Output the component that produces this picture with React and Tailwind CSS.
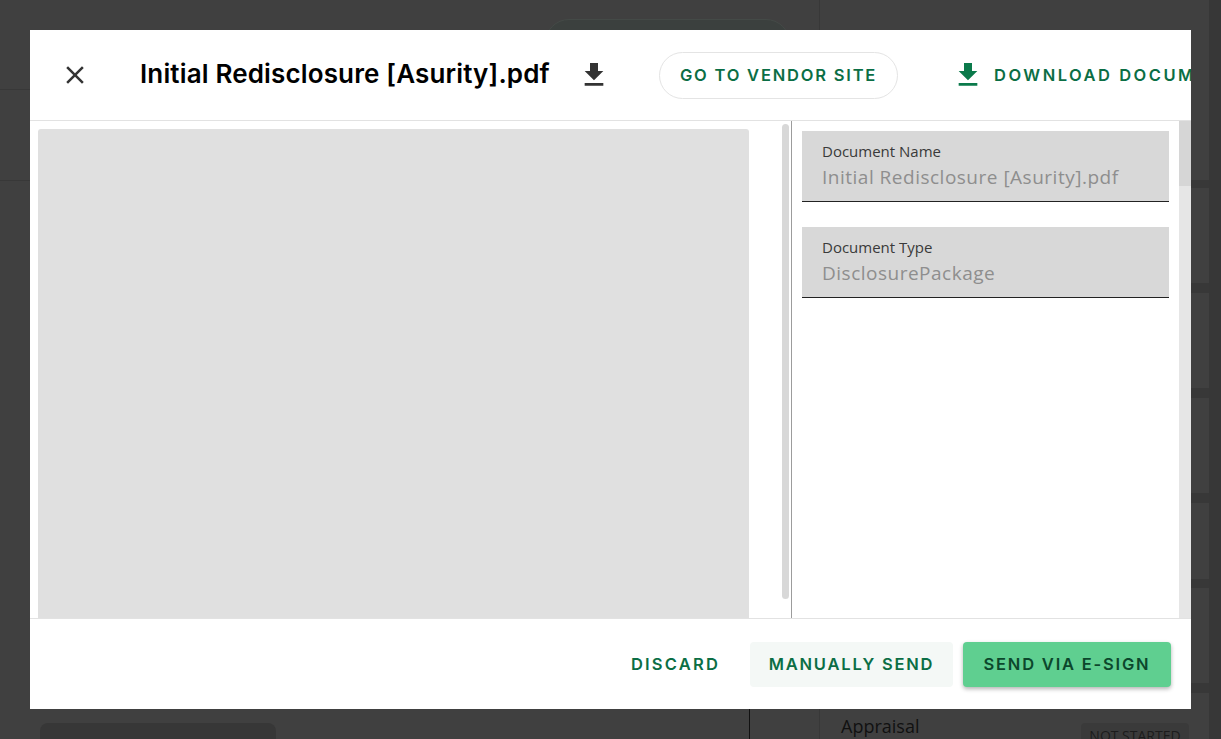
import React from "react";

const poppins = "font-['Inter','Liberation_Sans',sans-serif]";
const open = "font-['Open_Sans','Noto_Sans',sans-serif]";

function GetApp({ className }) {
  return (
    <svg viewBox="0 0 24 24" className={className} fill="currentColor">
      <path d="M19 9h-4V3H9v6H5l7 7 7-7zM5 18v2h14v-2H5z" />
    </svg>
  );
}

function Close({ className }) {
  return (
    <svg viewBox="0 0 24 24" className={className} fill="currentColor">
      <path d="M19 6.41 17.59 5 12 10.59 6.41 5 5 6.41 10.59 12 5 17.59 6.41 19 12 13.41 17.59 19 19 17.59 13.41 12z" />
    </svg>
  );
}

function Field({ label, value }) {
  return (
    <div className={`h-[71px] bg-[#d8d8d8] border-b border-[#222222] pl-5 pt-[11px] ${open}`}>
      <div className="text-[15px] leading-[19px] text-[#3a3a3a]">{label}</div>
      <div className="text-[19px] leading-[32px] tracking-[0.5px] text-[#8e8e8e] whitespace-nowrap">{value}</div>
    </div>
  );
}

function BackCard({ h, children }) {
  return <div className={`${h} shrink-0 bg-[#404040]`}>{children}</div>;
}

export default function App() {
  return (
    <div className="relative h-[739px] w-[1221px] overflow-hidden bg-[#404040] flex">
      {/* dimmed page behind the dialog */}
      <div className="w-[820px] shrink-0 border-r border-[#383838] flex flex-col">
        <div className="h-[90px] shrink-0 border-b border-[#383838] pl-[545px] pt-[19px]">
          <div className="w-[245px] h-[48px] rounded-[24px] bg-[#3b403e] border border-[#444a47]" />
        </div>
        <div className="h-[91px] shrink-0 border-b border-[#383838]" />
        <div className="flex-1 min-h-0">
          <div className="w-[750px] h-full border-r border-[#111111] pl-10 pt-[542px]">
            <div className="w-[236px] h-[40px] rounded-t-[8px] bg-[#373737]" />
          </div>
        </div>
      </div>
      <div className="w-[389px] shrink-0 bg-[#383838] flex flex-col">
        <BackCard h="h-[180px]" />
        <div className="h-[8px] shrink-0" />
        <BackCard h="h-[95px]" />
        <div className="h-[10px] shrink-0" />
        <BackCard h="h-[95px]" />
        <div className="h-[10px] shrink-0" />
        <BackCard h="h-[95px]" />
        <div className="h-[10px] shrink-0" />
        <BackCard h="h-[76px]" />
        <div className="h-[9px] shrink-0" />
        <BackCard h="h-[95px]" />
        <div className="h-[10px] shrink-0" />
        <div className={`flex-1 bg-[#404040] flex justify-between pl-[21px] pr-5 pt-5 ${open}`}>
          <span className="text-[18px] leading-[26px] text-[#111111]">Appraisal</span>
          <span className="mt-[10px] h-[30px] w-[108px] rounded-[4px] bg-[#3a3a3a] pt-[3px] text-center text-[14px] leading-[20px] text-[#1c1c1c] whitespace-nowrap">NOT STARTED</span>
        </div>
      </div>
      <div className="flex-1 bg-[#373737]" />

      {/* dialog */}
      <div className="absolute left-[30px] top-[30px] w-[1161px] h-[679px] bg-white flex flex-col overflow-hidden">
        <header className={`h-[91px] shrink-0 border-b border-[#e2e2e2] flex items-center whitespace-nowrap ${poppins}`}>
          <Close className="ml-[30px] w-[30px] h-[30px] text-[#333333] shrink-0" />
          <h1 className="ml-[50px] w-[409px] shrink-0 mb-[2px] text-[26px] leading-[32px] font-semibold tracking-[0.15px] text-black">
            Initial Redisclosure [Asurity].pdf
          </h1>
          <GetApp className="ml-[29px] w-8 h-8 text-[#333333] shrink-0" />
          <button className="ml-[49px] h-[47px] w-[239px] shrink-0 rounded-full border border-[#e4e4e4] text-[16.5px] font-semibold tracking-[1.8px] text-[#0b6e45]">
            GO TO VENDOR SITE
          </button>
          <GetApp className="ml-[54px] w-8 h-8 text-[#0b7a4b] shrink-0" />
          <span className="ml-[10px] shrink-0 text-[16.5px] font-semibold tracking-[2.5px] text-[#0b6e45]">DOWNLOAD DOCUMENT</span>
        </header>

        <div className="flex-1 min-h-0 flex">
          <div className="w-[762px] shrink-0 flex border-r border-[#9c9c9c]">
            <div className="ml-2 mt-2 w-[711px] rounded-t-[3px] bg-[#e0e0e0]" />
            <div className="ml-[33px] mt-[3px] w-[7px] h-[475px] rounded-full bg-[#d8d8d8]" />
          </div>
          <div className="flex-1 pl-[10px] pr-[10px] pt-[10px] flex flex-col gap-[25px]">
            <Field label="Document Name" value="Initial Redisclosure [Asurity].pdf" />
            <Field label="Document Type" value="DisclosurePackage" />
          </div>
          <div className="w-3 shrink-0 bg-[#e6e6e6]">
            <div className="h-[65px] bg-[#d6d6d6]" />
          </div>
        </div>

        <footer className={`h-[91px] shrink-0 border-t border-[#e2e2e2] flex items-center justify-end gap-[10px] pr-5 whitespace-nowrap text-[16.5px] font-semibold tracking-[1.8px] ${poppins}`}>
          <button className="h-[45px] px-5 text-[#0b6e45] tracking-[2.2px]">DISCARD</button>
          <button className="h-[45px] w-[203px] rounded-[4px] bg-[#f4f8f6] text-[#0b6e45]">MANUALLY SEND</button>
          <button className="h-[45px] w-[208px] rounded-[4px] bg-[#5fcf90] text-[#0c472c] shadow-[0_2px_4px_rgba(0,0,0,0.3)]">SEND VIA E-SIGN</button>
        </footer>
      </div>
    </div>
  );
}
